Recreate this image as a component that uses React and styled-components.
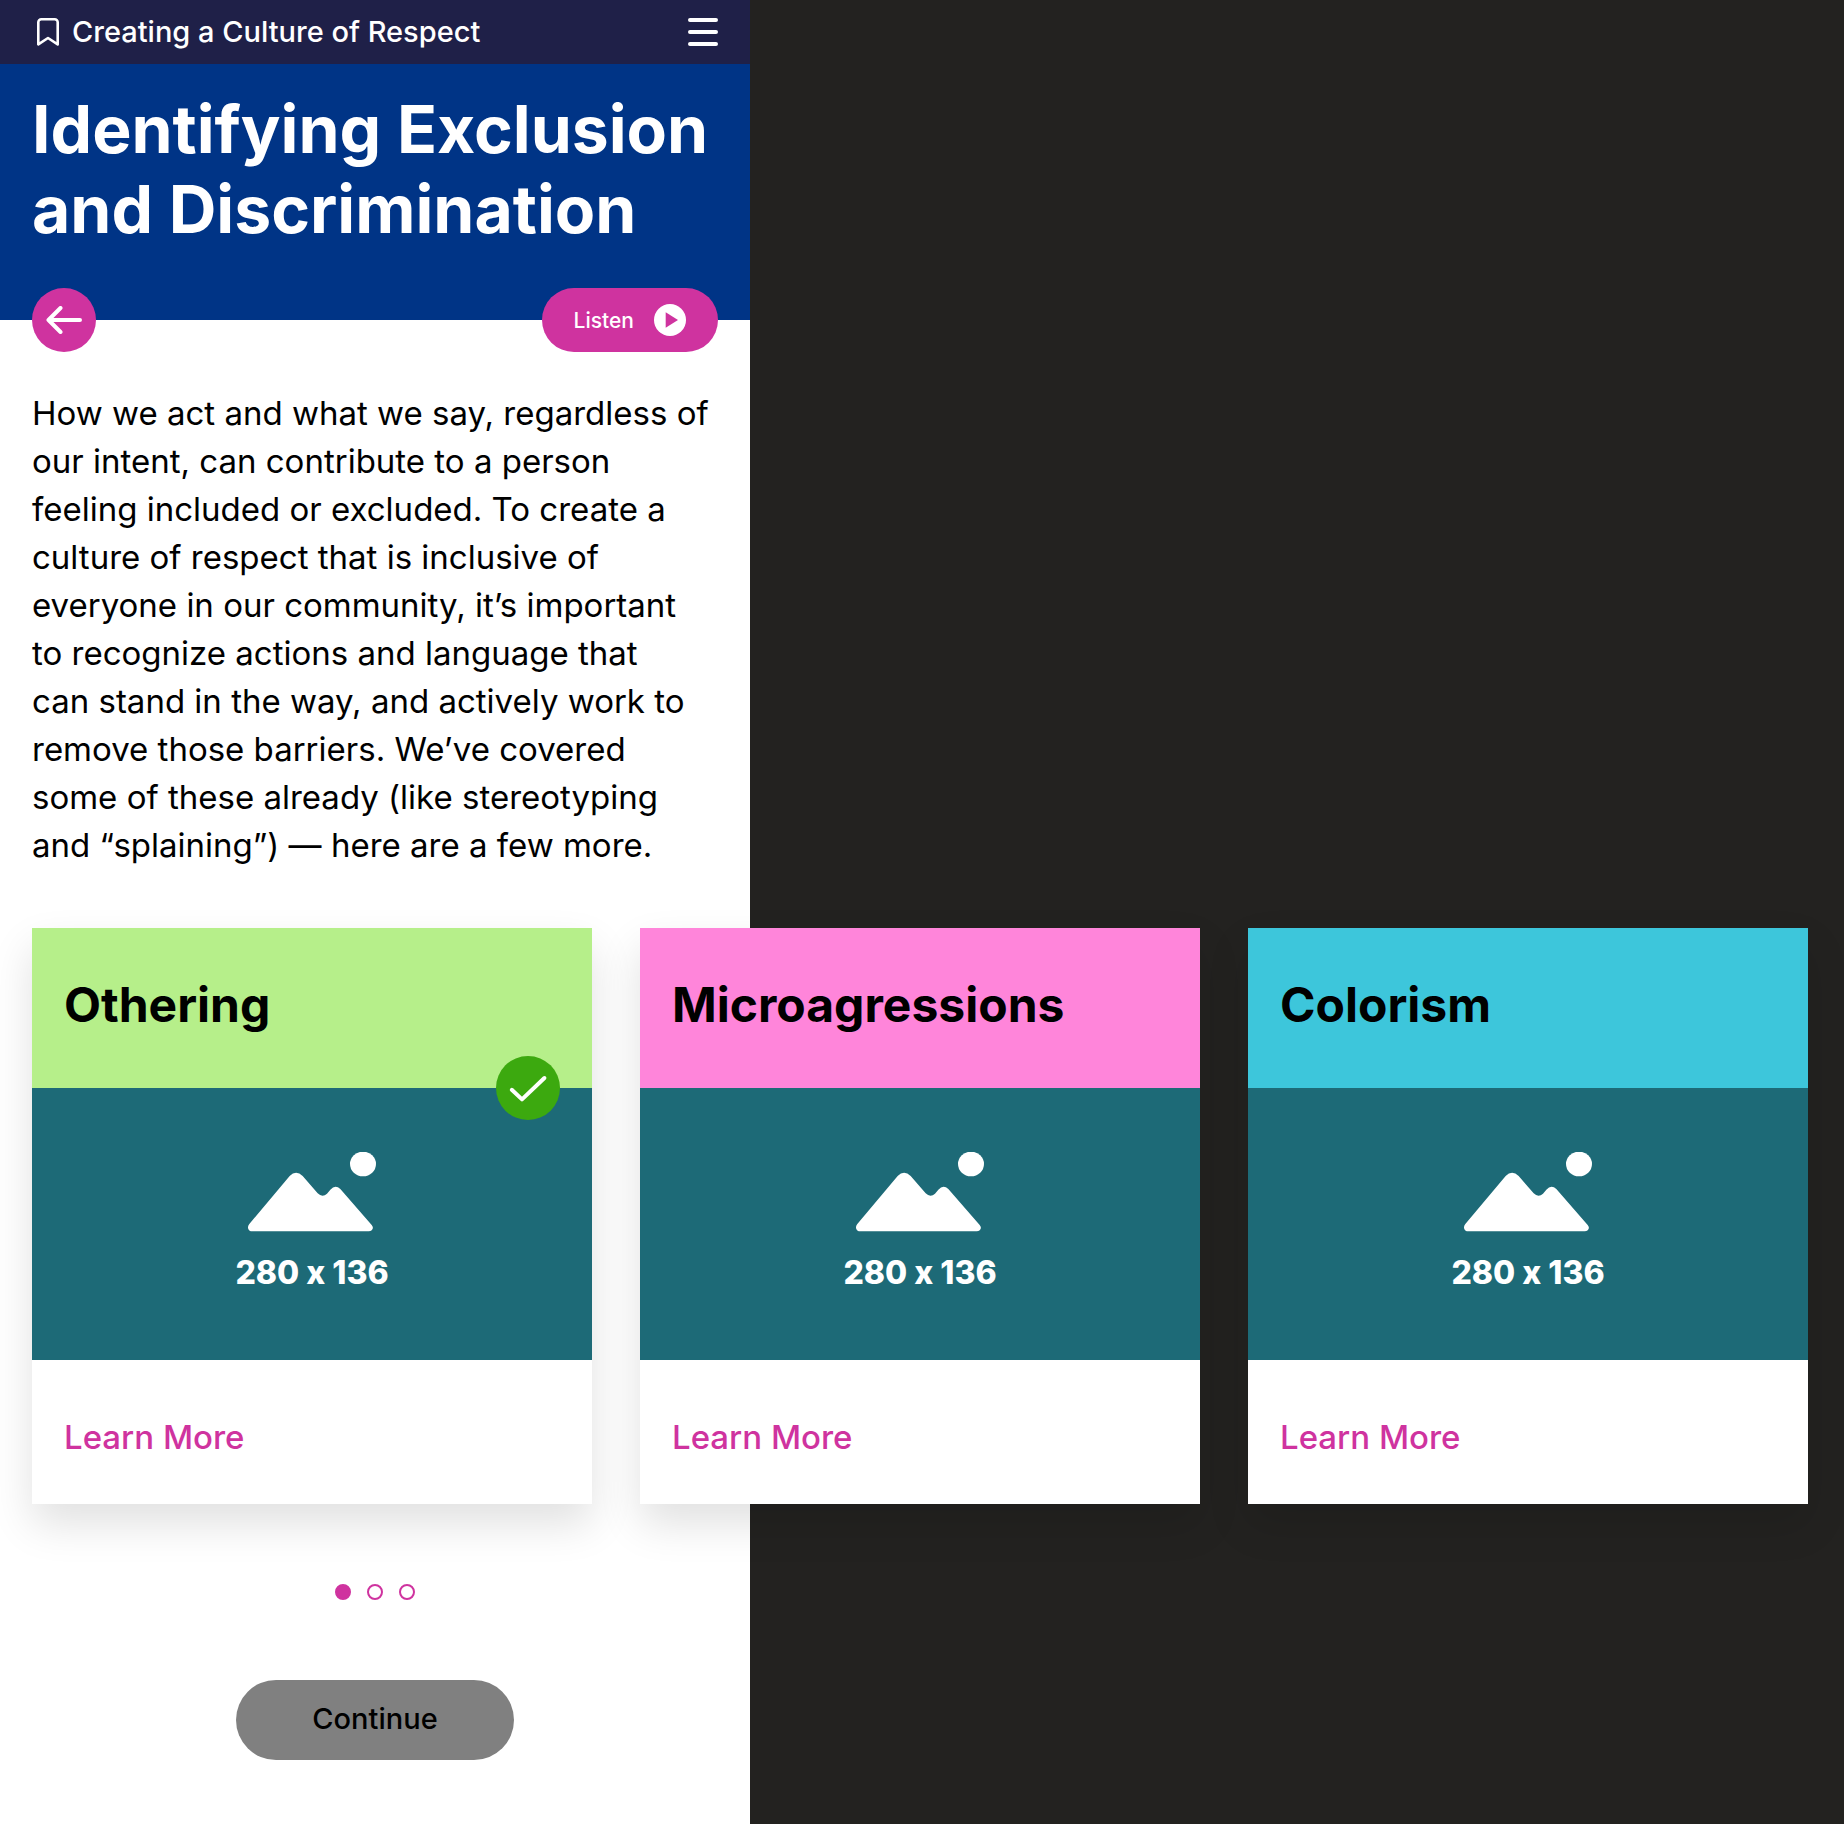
import React from "react";
import styled, { createGlobalStyle } from "styled-components";

const color = {
  ink: "#000000",
  canvas: "#232220",
  navy: "#1f2048",
  blue: "#003486",
  magenta: "#cf339f",
  teal: "#1d6a77",
  success: "#3ca90f",
  disabled: "#808080",
};

const GlobalStyle = createGlobalStyle`
  *, *::before, *::after { box-sizing: border-box; }
  body {
    margin: 0;
    min-width: 0;
    overflow-x: hidden;
    background: ${color.canvas};
    color: ${color.ink};
    font-family: Inter, "Open Sans", "Liberation Sans", sans-serif;
    font-variant-ligatures: no-contextual;
  }
  h1, h2, p { margin: 0; }
  button { border: 0; padding: 0; font: inherit; cursor: pointer; }
  svg { display: block; flex: none; }
`;

const Page = styled.div`
  display: flex;
  flex-direction: column;
  width: 100%;
  max-width: 750px;
  min-height: 100vh;
  background: #ffffff;
`;

const TopBar = styled.header`
  display: flex;
  align-items: center;
  justify-content: space-between;
  min-height: 64px;
  padding: 0 32px;
  background: ${color.navy};
  color: #ffffff;
`;

const CourseLink = styled.a`
  display: flex;
  align-items: center;
  gap: 8px;
  color: inherit;
  font-size: 29px;
  font-weight: 500;
  line-height: 40px;
  text-decoration: none;
`;

const MenuButton = styled.button`
  background: none;
  color: inherit;
`;

const Banner = styled.div`
  padding: 25px 32px 71px;
  background: ${color.blue};
  color: #ffffff;
`;

const Title = styled.h1`
  font-size: 66px;
  font-weight: 700;
  line-height: 80px;
`;

const Controls = styled.div`
  display: flex;
  justify-content: space-between;
  margin-top: -32px;
  padding: 0 32px;
`;

const PillButton = styled.button`
  display: flex;
  align-items: center;
  justify-content: center;
  gap: 20px;
  height: 64px;
  min-width: 64px;
  padding: 0 ${(p) => (p.$round ? 0 : 32)}px;
  border-radius: 32px;
  background: ${color.magenta};
  color: #ffffff;
  font-size: 21px;
  font-weight: 500;
`;

const Intro = styled.p`
  padding: 37px 32px 59px;
  font-size: 33px;
  line-height: 48px;
`;

const Carousel = styled.ul`
  display: flex;
  gap: 48px;
  margin: 0;
  padding: 0 32px;
  list-style: none;
`;

const Card = styled.li`
  flex: 0 0 560px;
  background: #ffffff;
  box-shadow: 0 20px 40px rgba(0, 0, 0, 0.12);
`;

const CardHeader = styled.div`
  position: relative;
  padding: 45px 32px 51px;
  background: ${(p) => p.$tone};
`;

const CardTitle = styled.h2`
  font-size: 48px;
  font-weight: 700;
  line-height: 64px;
`;

const DoneBadge = styled.span`
  position: absolute;
  right: 32px;
  bottom: -32px;
  display: grid;
  place-items: center;
  width: 64px;
  height: 64px;
  border-radius: 50%;
  background: ${color.success};
`;

const Placeholder = styled.div`
  display: flex;
  flex-direction: column;
  align-items: center;
  gap: 17px;
  padding: 64px 32px 63px;
  background: ${color.teal};
  color: #ffffff;
  font-size: 32px;
  font-weight: 800;
  line-height: 48px;
`;

const CardFooter = styled.div`
  display: flex;
  padding: 53px 32px 43px;
`;

const LearnMore = styled.a`
  color: ${color.magenta};
  font-size: 33px;
  font-weight: 500;
  line-height: 48px;
  text-decoration: none;
`;

const Dots = styled.div`
  display: flex;
  justify-content: center;
  gap: 16px;
  padding: 80px 32px;
`;

const Dot = styled.button`
  width: 16px;
  height: 16px;
  border: 2px solid ${color.magenta};
  border-radius: 50%;
  background: ${(p) => (p.$active ? color.magenta : "transparent")};
`;

const Actions = styled.div`
  display: flex;
  justify-content: center;
  padding: 0 32px 64px;
`;

const ContinueButton = styled.button`
  width: 278px;
  height: 80px;
  padding-bottom: 4px;
  border-radius: 40px;
  background: ${color.disabled};
  color: ${color.ink};
  font-size: 29px;
  font-weight: 500;
`;

const BookmarkIcon = () => (
  <svg width="32" height="32" viewBox="0 0 32 32" fill="none" aria-hidden="true">
    <path
      d="M6.3 28.4V6.3a3 3 0 0 1 3-3h13.4a3 3 0 0 1 3 3v22.1L16 22Z"
      stroke="currentColor"
      strokeWidth="2.6"
      strokeLinejoin="round"
    />
  </svg>
);

const MenuIcon = () => (
  <svg width="30" height="28" viewBox="0 0 30 28" fill="none" aria-hidden="true">
    <path d="M2 2h26M2 14h26M2 26h26" stroke="currentColor" strokeWidth="4" strokeLinecap="round" />
  </svg>
);

const BackIcon = () => (
  <svg width="36" height="28" viewBox="0 0 36 28" fill="none" aria-hidden="true">
    <path
      d="M34 14H2.5M14.5 2l-12 12 12 12"
      stroke="currentColor"
      strokeWidth="4"
      strokeLinecap="round"
      strokeLinejoin="round"
    />
  </svg>
);

const PlayIcon = () => (
  <svg width="32" height="32" viewBox="0 0 32 32" aria-hidden="true">
    <circle cx="16" cy="16" r="16" fill="#ffffff" />
    <path d="M11.7 8.2 24 16l-12.3 7.8Z" fill={color.magenta} />
  </svg>
);

const CheckIcon = () => (
  <svg width="64" height="64" viewBox="0 0 64 64" fill="none" role="img" aria-label="Completed">
    <path
      d="M15.8 33.8 26 43.4l22.4-21.4"
      stroke="#ffffff"
      strokeWidth="4"
      strokeLinecap="round"
      strokeLinejoin="round"
    />
  </svg>
);

const LandscapeIcon = () => (
  <svg width="128" height="80" viewBox="84 66 384 240" fill="#ffffff" aria-hidden="true">
    <ellipse cx="429" cy="102" rx="39" ry="37" />
    <path d="M88 282 209 138Q228 118 248 138L293 190Q307 204 321 191L331 179Q346 163 361 177L455 285C463 294 457 304 446 304H98C84 304 80 292 88 282Z" />
  </svg>
);

const introLines = [
  "How we act and what we say, regardless of",
  "our intent, can contribute to a person",
  "feeling included or excluded. To create a",
  "culture of respect that is inclusive of",
  "everyone in our community, it’s important",
  "to recognize actions and language that",
  "can stand in the way, and actively work to",
  "remove those barriers. We’ve covered",
  "some of these already (like stereotyping",
  "and “splaining”) — here are a few more.",
];

const topics = [
  { title: "Othering", tone: "#b6ef8a", done: true },
  { title: "Microagressions", tone: "#ff85da" },
  { title: "Colorism", tone: "#3dc6db" },
];

export default function App() {
  return (
    <>
      <GlobalStyle />
      <Page>
        <TopBar>
          <CourseLink href="#course">
            <BookmarkIcon />
            Creating a Culture of Respect
          </CourseLink>
          <MenuButton type="button" aria-label="Menu">
            <MenuIcon />
          </MenuButton>
        </TopBar>
        <main>
          <Banner>
            <Title>Identifying Exclusion and Discrimination</Title>
          </Banner>
          <Controls>
            <PillButton type="button" $round aria-label="Back">
              <BackIcon />
            </PillButton>
            <PillButton type="button">
              Listen
              <PlayIcon />
            </PillButton>
          </Controls>
          <Intro>
            {introLines.map((line, i) => (
              <React.Fragment key={line}>
                {i > 0 && <br />}
                {line}
              </React.Fragment>
            ))}
          </Intro>
          <Carousel>
            {topics.map((topic) => (
              <Card key={topic.title}>
                <CardHeader $tone={topic.tone}>
                  <CardTitle>{topic.title}</CardTitle>
                  {topic.done && (
                    <DoneBadge>
                      <CheckIcon />
                    </DoneBadge>
                  )}
                </CardHeader>
                <Placeholder>
                  <LandscapeIcon />
                  280 x 136
                </Placeholder>
                <CardFooter>
                  <LearnMore href={`#${topic.title.toLowerCase()}`}>Learn More</LearnMore>
                </CardFooter>
              </Card>
            ))}
          </Carousel>
          <Dots>
            {topics.map((topic, i) => (
              <Dot key={topic.title} type="button" $active={i === 0} aria-label={`Show ${topic.title}`} />
            ))}
          </Dots>
          <Actions>
            <ContinueButton type="button">Continue</ContinueButton>
          </Actions>
        </main>
      </Page>
    </>
  );
}
